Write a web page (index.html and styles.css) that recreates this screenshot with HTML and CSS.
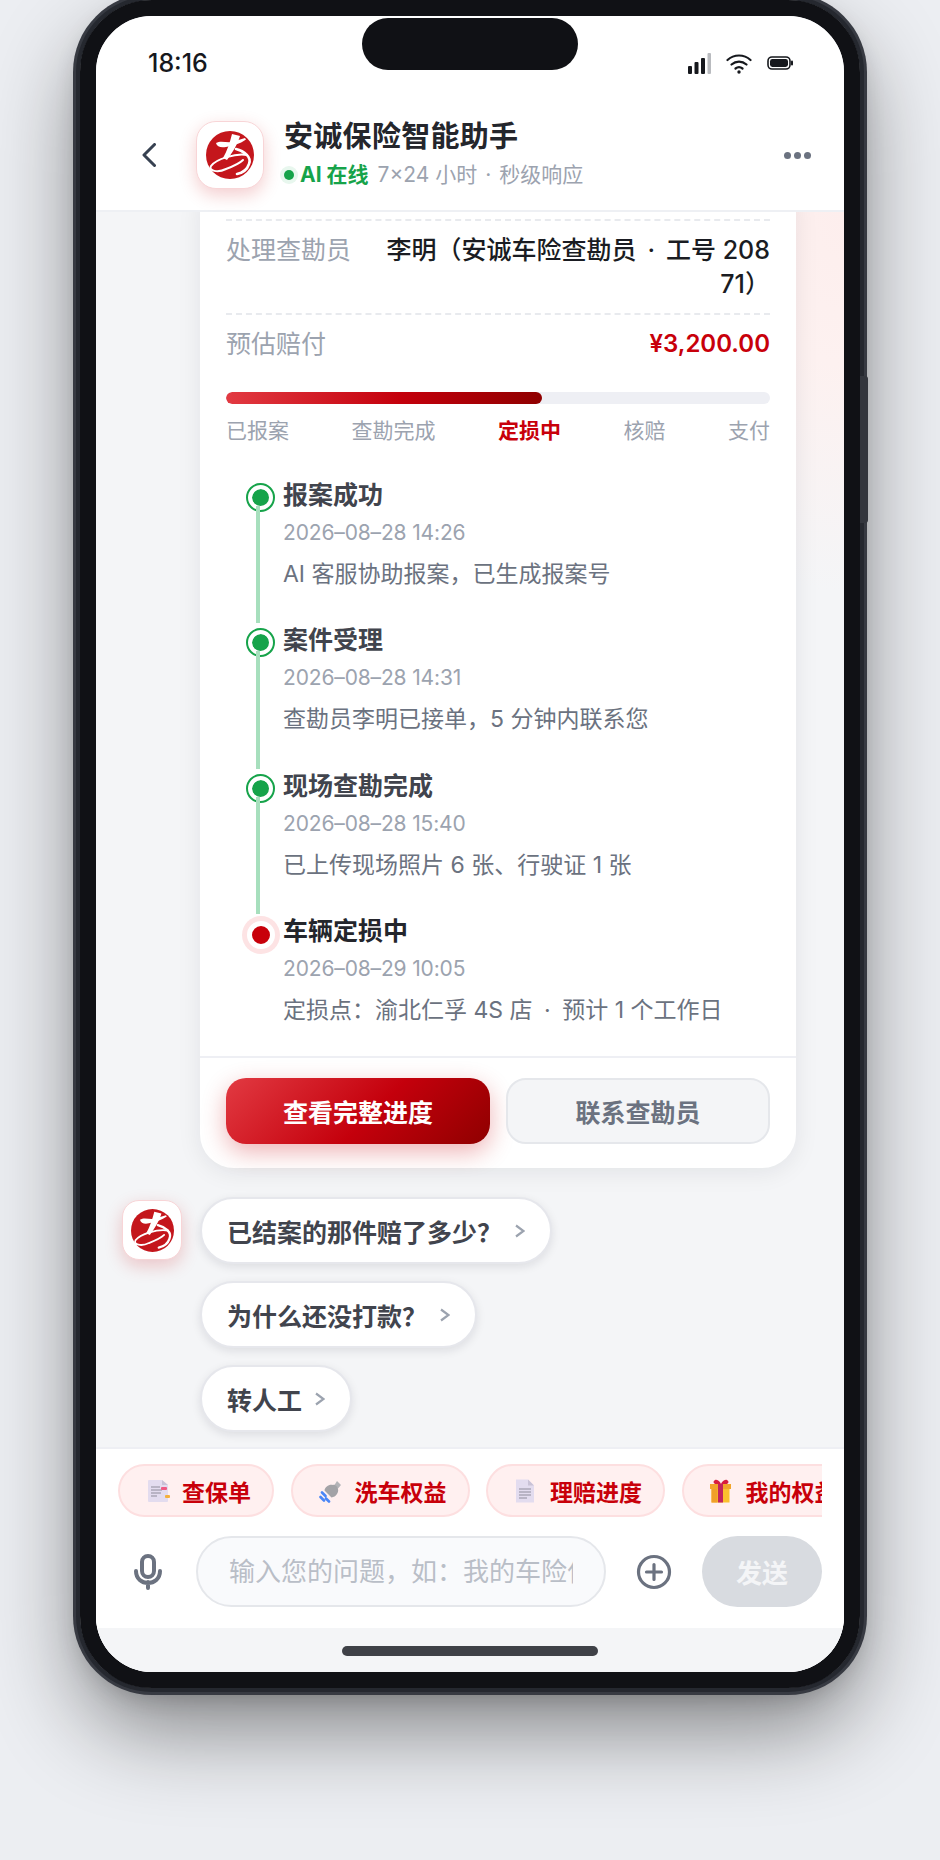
FILE: index.html
```html
<!DOCTYPE html>
<html lang="zh-CN">
<head>
<meta charset="UTF-8" />
<title>安诚保险智能助手</title>
<link rel="stylesheet" href="styles.css">
</head>
<body>

<svg class="defs" width="0" height="0">
  <symbol id="logo" viewBox="0 0 48 48">
    <circle cx="24" cy="24" r="24" fill="#c4161c" />
    <path fill="#fff" d="M10 12C15 9 20 12 26 11L39 7L40 8.5C34 13 26 15 20 16C15 17 11 16 10 12Z" />
    <path fill="#fff" d="M26 3L34 5C32 12 27 21 21 29L17 27C21 20 24 11 26 3Z" />
    <path fill="none" stroke="#fff" stroke-width="2.6" stroke-linecap="round" d="M30 18C38 20 46 26 43 33C41 39 36 42 31 43" />
    <path fill="none" stroke="#fff" stroke-width="2" stroke-linecap="round" d="M41 24C30 22 10 28 5 35C2 40 12 42 20 38C28 35 34 32 37 29" />
  </symbol>
  <symbol id="chev" viewBox="0 0 10 14">
    <path fill="none" stroke="#9ca3af" stroke-width="2.2" d="M1 1.5L8.5 7L1 12.5" />
  </symbol>
</svg>

<div class="phone">
  <span class="side-btn"></span>
  <div class="screen">
    <span class="notch"></span>

    <div class="status">
      <span class="time">18:16</span>
      <div class="status-icons">
        <svg width="23" height="21" viewBox="0 0 23 21">
          <rect x="0" y="13" width="4" height="8" rx="1" fill="#16181d" />
          <rect x="6.5" y="9" width="4" height="12" rx="1" fill="#16181d" />
          <rect x="13" y="5" width="4" height="16" rx="1" fill="#16181d" />
          <rect x="19.5" y="0" width="3.5" height="21" rx="1" fill="#b9bbbf" />
        </svg>
        <svg width="26" height="21" viewBox="0 0 26 21">
          <path fill="none" stroke="#16181d" stroke-width="2.2" stroke-linecap="round" d="M1.5 7C8 1 18 1 24.5 7M5.5 11.5C10 7.6 16 7.6 20.5 11.5M9.5 15.5C11.5 14 14.5 14 16.5 15.5" />
          <circle cx="13" cy="19" r="1.7" fill="#16181d" />
        </svg>
        <svg width="26" height="14" viewBox="0 0 26 14">
          <rect x="1" y="1" width="22" height="12" rx="4" fill="none" stroke="#16181d" stroke-width="1.6" />
          <rect x="3" y="3" width="18" height="8" rx="2.4" fill="#16181d" />
          <rect x="24" y="4.5" width="2" height="5" rx="1" fill="#16181d" />
        </svg>
      </div>
    </div>

    <header class="top">
      <svg class="back" width="14" height="24" viewBox="0 0 14 24">
        <path fill="none" stroke="#374151" stroke-width="3" stroke-linecap="round" stroke-linejoin="round" d="M12.5 1.5L2 12L12.5 22.5" />
      </svg>
      <div class="avatar"><svg width="48" height="48"><use href="#logo" /></svg></div>
      <div class="top-text">
        <div class="top-title">安诚保险智能助手</div>
        <div class="top-sub">
          <span class="online-dot"></span>
          <span class="online">AI 在线</span>
          <span>7×24 小时<span class="sep">·</span>秒级响应</span>
        </div>
      </div>
      <div class="more"><i></i><i></i><i></i></div>
    </header>

    <div class="chat">
      <section class="card">
        <div class="card-body">
          <div class="row">
            <span class="row-label">处理查勘员</span>
            <span class="row-value">李明（安诚车险查勘员<span class="sep">·</span>工号 20871）</span>
          </div>
          <div class="row">
            <span class="row-label">预估赔付</span>
            <span class="row-value price">¥3,200.00</span>
          </div>

          <div class="bar"><div class="bar-fill" style="width: 58%"></div></div>
          <div class="steps">
            <span>已报案</span>
            <span>查勘完成</span>
            <span class="on">定损中</span>
            <span>核赔</span>
            <span>支付</span>
          </div>

          <div class="timeline">
            <div class="tl-item">
              <span class="tl-dot"></span>
              <div class="tl-title">报案成功</div>
              <div class="tl-date">2026–08–28 14:26</div>
              <div class="tl-desc">AI 客服协助报案，已生成报案号</div>
            </div>
            <div class="tl-item">
              <span class="tl-dot"></span>
              <div class="tl-title">案件受理</div>
              <div class="tl-date">2026–08–28 14:31</div>
              <div class="tl-desc">查勘员李明已接单，5 分钟内联系您</div>
            </div>
            <div class="tl-item">
              <span class="tl-dot"></span>
              <div class="tl-title">现场查勘完成</div>
              <div class="tl-date">2026–08–28 15:40</div>
              <div class="tl-desc">已上传现场照片 6 张、行驶证 1 张</div>
            </div>
            <div class="tl-item current">
              <span class="tl-dot"></span>
              <div class="tl-title">车辆定损中</div>
              <div class="tl-date">2026–08–29 10:05</div>
              <div class="tl-desc">定损点：渝北仁孚 4S 店<span class="sep">·</span>预计 1 个工作日</div>
            </div>
          </div>
        </div>
        <div class="card-foot">
          <button class="btn primary">查看完整进度</button>
          <button class="btn">联系查勘员</button>
        </div>
      </section>

      <div class="suggest">
        <div class="avatar small"><svg width="43" height="43"><use href="#logo" /></svg></div>
        <div class="pills">
          <div class="pill">已结案的那件赔了多少？<svg width="10" height="14"><use href="#chev" /></svg></div>
          <div class="pill">为什么还没打款？<svg width="10" height="14"><use href="#chev" /></svg></div>
          <div class="pill">转人工<svg width="10" height="14"><use href="#chev" /></svg></div>
        </div>
      </div>
    </div>

    <div class="dock">
      <div class="chips">
        <div class="chip">
          <svg width="26" height="24" viewBox="0 0 26 24">
            <path fill="#e3dcef" d="M2 2Q2 1 3 1H16L22 6V22Q22 23 21 23H3Q2 23 2 22Z" />
            <path fill="#c9c2d6" d="M16 1L22 6H16Z" />
            <path stroke="#8f8b9c" stroke-width="1.2" d="M5 8H14M5 11H16M5 14H15M5 17H11" />
            <rect x="15" y="8" width="6" height="3" rx="1" fill="#ee5a83" />
            <rect x="19" y="16" width="5" height="3" rx="1" fill="#f3b03d" />
          </svg>
          查保单
        </div>
        <div class="chip">
          <svg width="26" height="24" viewBox="0 0 26 24">
            <path fill="#b4b4b8" d="M18 2L22 6L19 9.5L15.5 6Z" />
            <path fill="#a3a3a7" d="M14 6C16 5 19 8 19 10C20 13 17 18 12.5 18.5L5.5 11.5C6 8 10 5 14 6Z" />
            <path stroke="#4a86f7" stroke-width="2.6" stroke-linecap="round" d="M3 13.5L6.5 17M1.5 18L5 21.5M7 19.5L10 22.5" />
          </svg>
          洗车权益
        </div>
        <div class="chip">
          <svg width="26" height="24" viewBox="0 0 26 24">
            <path fill="#e3dcef" d="M2 0.5H14L20 6.5V23.5H2Z" />
            <path fill="#c9c2d6" d="M14 0.5L20 6.5H14Z" />
            <path stroke="#8f8b9c" stroke-width="1.2" d="M5 10H17M5 13H17M5 16H17M5 19H13" />
          </svg>
          理赔进度
        </div>
        <div class="chip">
          <svg width="26" height="24" viewBox="0 0 26 24">
            <path fill="#d81e3f" d="M5 1C8 0 10 3 11 5H5C3 4 3 2 5 1ZM17 1C14 0 12 3 11 5H17C19 4 19 2 17 1Z" />
            <rect x="0" y="5" width="21" height="5" fill="#f2a52b" />
            <rect x="1.5" y="10" width="18" height="13.5" fill="#fbc02d" />
            <rect x="1.5" y="10" width="6" height="13.5" fill="#f0a02a" />
            <rect x="8" y="5" width="5" height="18.5" fill="#c2255c" />
          </svg>
          我的权益
        </div>
      </div>

      <div class="composer">
        <div class="tool">
          <svg width="30" height="36" viewBox="0 0 30 36">
            <rect x="9" y="2" width="12" height="21" rx="6" fill="none" stroke="#6b7280" stroke-width="4" />
            <path fill="none" stroke="#6b7280" stroke-width="4" stroke-linecap="round" d="M3 17C3 33 27 33 27 17M15 28V34" />
          </svg>
        </div>
        <input class="ask" type="text" placeholder="输入您的问题，如：我的车险什么时候到期" />
        <div class="tool">
          <svg width="36" height="36" viewBox="0 0 36 36">
            <circle cx="18" cy="18" r="15.5" fill="none" stroke="#6b7280" stroke-width="3.2" />
            <path stroke="#6b7280" stroke-width="3.2" stroke-linecap="round" d="M18 10.5V25.5M10.5 18H25.5" />
          </svg>
        </div>
        <button class="send">发送</button>
      </div>
    </div>

    <div class="home"><span class="home-bar"></span></div>
  </div>
</div>

</body>
</html>
```

FILE: styles.css
```css
* {
  box-sizing: border-box;
}
body {
  margin: 0;
  height: 1860px;
  overflow: hidden;
  background: #eceef2;
  font-family: Inter, "Noto Sans CJK SC", sans-serif;
  color: #1a1c22;
}
button, input {
  font-family: inherit;
}
.defs {
  position: absolute;
}
.sep {
  margin: 0 0.38em;
}
.row-value .sep {
  margin: 0 0.44em;
}
.tl-desc .sep {
  margin: 0 0.5em;
}

/* phone frame */
.phone {
  position: relative;
  width: 780px;
  height: 1688px;
  margin: 0 auto;
  border: 16px solid #101115;
  border-radius: 72px;
  box-shadow:
    0 0 0 4px #25282f,
    0 0 0 7px #373a42,
    0 8px 24px rgba(0, 0, 0, 0.18),
    0 40px 90px rgba(0, 0, 0, 0.46);
}
.side-btn {
  position: absolute;
  right: -24px;
  top: 360px;
  width: 8px;
  height: 147px;
  background: #33363d;
  border-radius: 0 3px 3px 0;
}
.screen {
  position: relative;
  display: flex;
  flex-direction: column;
  height: 100%;
  background: #fff;
  border-radius: 56px;
  overflow: hidden;
}
.notch {
  position: absolute;
  left: 266px;
  top: 2px;
  width: 216px;
  height: 52px;
  background: #101115;
  border-radius: 26px;
}

/* status bar */
.status {
  display: flex;
  justify-content: space-between;
  align-items: center;
  height: 88px;
  padding: 6px 51px 0 52px;
  flex-shrink: 0;
}
.time {
  font-size: 25px;
  font-weight: 500;
  color: #16181d;
}
.status-icons {
  display: flex;
  align-items: center;
  gap: 15px;
}

/* header */
.top {
  display: flex;
  align-items: center;
  height: 108px;
  padding: 0 33px 4px 46px;
  border-bottom: 2px solid #eef0f4;
  flex-shrink: 0;
}
.back {
  margin-right: 40px;
}
.avatar {
  display: flex;
  align-items: center;
  justify-content: center;
  width: 68px;
  height: 68px;
  background: #fff;
  border: 1px solid #f8d5d7;
  border-radius: 20px;
  box-shadow: 0 6px 18px rgba(200, 0, 10, 0.2);
  flex-shrink: 0;
}
.avatar.small {
  width: 60px;
  height: 60px;
  border-radius: 17px;
}
.top-text {
  flex: 1;
  margin-left: 20px;
  padding-bottom: 4px;
}
.top-title {
  font-size: 29px;
  font-weight: 600;
  letter-spacing: 0.3px;
  line-height: 40px;
  color: #24262c;
}
.top-sub {
  display: flex;
  align-items: center;
  margin-top: 3px;
  font-size: 21px;
  line-height: 30px;
  color: #9ca3af;
}
.online-dot {
  width: 10px;
  height: 10px;
  margin: 0 6px 0 0;
  background: #16a34a;
  border-radius: 50%;
  box-shadow: 0 0 0 4px #e8f7ee;
}
.online {
  margin-right: 9px;
  font-weight: 700;
  color: #16a34a;
}
.more {
  display: flex;
  gap: 3px;
}
.more i {
  width: 7px;
  height: 7px;
  background: #6b7280;
  border-radius: 50%;
}

/* chat area, pinned to the bottom so the card runs under the header */
.chat {
  flex: 1 1 0;
  display: flex;
  flex-direction: column;
  justify-content: flex-end;
  min-height: 0;
  padding: 0 48px 15px 26px;
  background: radial-gradient(ellipse 240px 380px at 100% 0, #fdeeed 0, #fdf1f0 40%, #f4f5f7 100%) #f4f5f7;
  overflow: hidden;
}
.card {
  flex-shrink: 0;
  margin-left: 78px;
  background: #fff;
  border-radius: 34px;
  box-shadow: 0 4px 24px rgba(17, 24, 39, 0.08);
}
.card-body {
  padding: 40px 26px 0;
}
.row {
  display: flex;
  justify-content: space-between;
  align-items: center;
  padding: 12px 0;
  border-top: 2px dashed #e8eaee;
  font-size: 25px;
  line-height: 34px;
}
.row:first-child {
  align-items: flex-start;
}
.row-label {
  color: #9ca3af;
  flex-shrink: 0;
}
.row-value {
  flex: 1;
  margin-left: 28px;
  text-align: right;
  word-break: break-all;
  font-weight: 500;
}
.price {
  font-size: 24px;
  font-weight: 600;
  color: #c8000a;
}
.bar {
  height: 12px;
  margin-top: 19px;
  background: #eeeff4;
  border-radius: 6px;
  overflow: hidden;
}
.bar-fill {
  height: 100%;
  background: linear-gradient(90deg, #e23a42, #c4000c 55%, #8f0000);
  border-radius: 6px;
}
.steps {
  display: flex;
  justify-content: space-between;
  margin-top: 12px;
  font-size: 21px;
  line-height: 30px;
  color: #9ca3af;
}
.steps .on {
  font-weight: 700;
  color: #c8000a;
}

/* timeline */
.timeline {
  margin-top: 32.6px;
  padding-bottom: 29.2px;
}
.tl-item {
  position: relative;
  padding: 0 0 32.5px 57px;
}
.tl-item:last-child {
  padding-bottom: 0;
}
.tl-item::after {
  content: "";
  position: absolute;
  left: 30px;
  top: 28px;
  bottom: 0;
  width: 4px;
  background: #a7dfbd;
}
.tl-item:last-child::after {
  display: none;
}
.tl-dot {
  position: absolute;
  left: 20px;
  top: 5px;
  width: 29px;
  height: 29px;
  padding: 3.5px;
  background: #16a34a content-box;
  border: 2px solid #16a34a;
  border-radius: 50%;
  box-shadow: inset 0 0 0 4px #fff;
}
.current .tl-dot {
  left: 21px;
  top: 7px;
  width: 28px;
  height: 28px;
  padding: 0;
  background: #c8000a;
  border: 5px solid #fff;
  box-shadow: 0 0 0 5px #fde3e4;
}
.tl-title {
  font-size: 25px;
  font-weight: 600;
  line-height: 34px;
  color: #41444d;
}
.current .tl-title {
  color: #24262c;
}
.tl-date {
  margin-top: 6px;
  font-size: 21px;
  letter-spacing: -0.15px;
  line-height: 30px;
  color: #9ca3af;
}
.tl-desc {
  margin-top: 8.8px;
  font-size: 23px;
  line-height: 34px;
  color: #6b7280;
}
.card-foot {
  display: flex;
  gap: 16px;
  padding: 20px 26px 24px;
  border-top: 2px solid #eeeff4;
}
.btn {
  flex: 1 1 50%;
  height: 66px;
  padding: 0;
  font-size: 25px;
  font-weight: 700;
  color: #6b7280;
  background: #f4f5f7;
  border: 2px solid #e5e7eb;
  border-radius: 20px;
}
.btn.primary {
  color: #fff;
  background: linear-gradient(135deg, #e23a42, #c4000c 55%, #8f0000);
  border: 0;
  box-shadow: 0 8px 24px rgba(200, 0, 10, 0.3);
}

/* suggestions */
.suggest {
  display: flex;
  gap: 18px;
  margin-top: 29px;
  flex-shrink: 0;
}
.suggest .avatar {
  margin-top: 3px;
}
.pills {
  display: flex;
  flex-direction: column;
  align-items: flex-start;
  gap: 17px;
}
.pill {
  display: flex;
  align-items: center;
  gap: 13px;
  height: 67px;
  padding: 0 25px;
  font-size: 25px;
  font-weight: 600;
  color: #41444d;
  background: #fff;
  border: 2px solid #e6e7ec;
  border-radius: 34px;
  box-shadow: 0 3px 10px rgba(17, 24, 39, 0.1);
}

/* bottom dock */
.dock {
  flex-shrink: 0;
  padding: 15px 22px 21px;
  background: #fff;
  border-top: 2px solid #eeeff4;
}
.chips {
  display: flex;
  gap: 16.5px;
  overflow: hidden;
}
.chip {
  display: flex;
  align-items: center;
  gap: 10px;
  height: 53px;
  padding: 0 21px 0 26px;
  font-size: 23px;
  font-weight: 600;
  color: #c8000a;
  white-space: nowrap;
  background: #fff0f0;
  border: 2px solid #fddfe0;
  border-radius: 27px;
  flex-shrink: 0;
}
.composer {
  display: flex;
  align-items: center;
  gap: 18px;
  margin-top: 19px;
}
.tool {
  display: flex;
  align-items: center;
  justify-content: center;
  width: 60px;
  flex-shrink: 0;
}
.ask {
  flex: 1;
  min-width: 0;
  height: 71px;
  padding: 0 31px;
  font-size: 26px;
  background: #f9fafc;
  border: 2px solid #e5e7eb;
  border-radius: 36px;
  outline: none;
}
.ask::placeholder {
  color: #b9bec7;
}
.send {
  width: 120px;
  height: 71px;
  padding: 0;
  font-size: 26px;
  font-weight: 700;
  color: #f4f5f7;
  background: #d8dbe0;
  border: 0;
  border-radius: 36px;
  flex-shrink: 0;
}
.home {
  height: 44px;
  flex-shrink: 0;
  display: flex;
  justify-content: center;
  padding-top: 18px;
  background: #f4f5f7;
}
.home-bar {
  width: 256px;
  height: 10px;
  background: #3f4147;
  border-radius: 5px;
}
```
